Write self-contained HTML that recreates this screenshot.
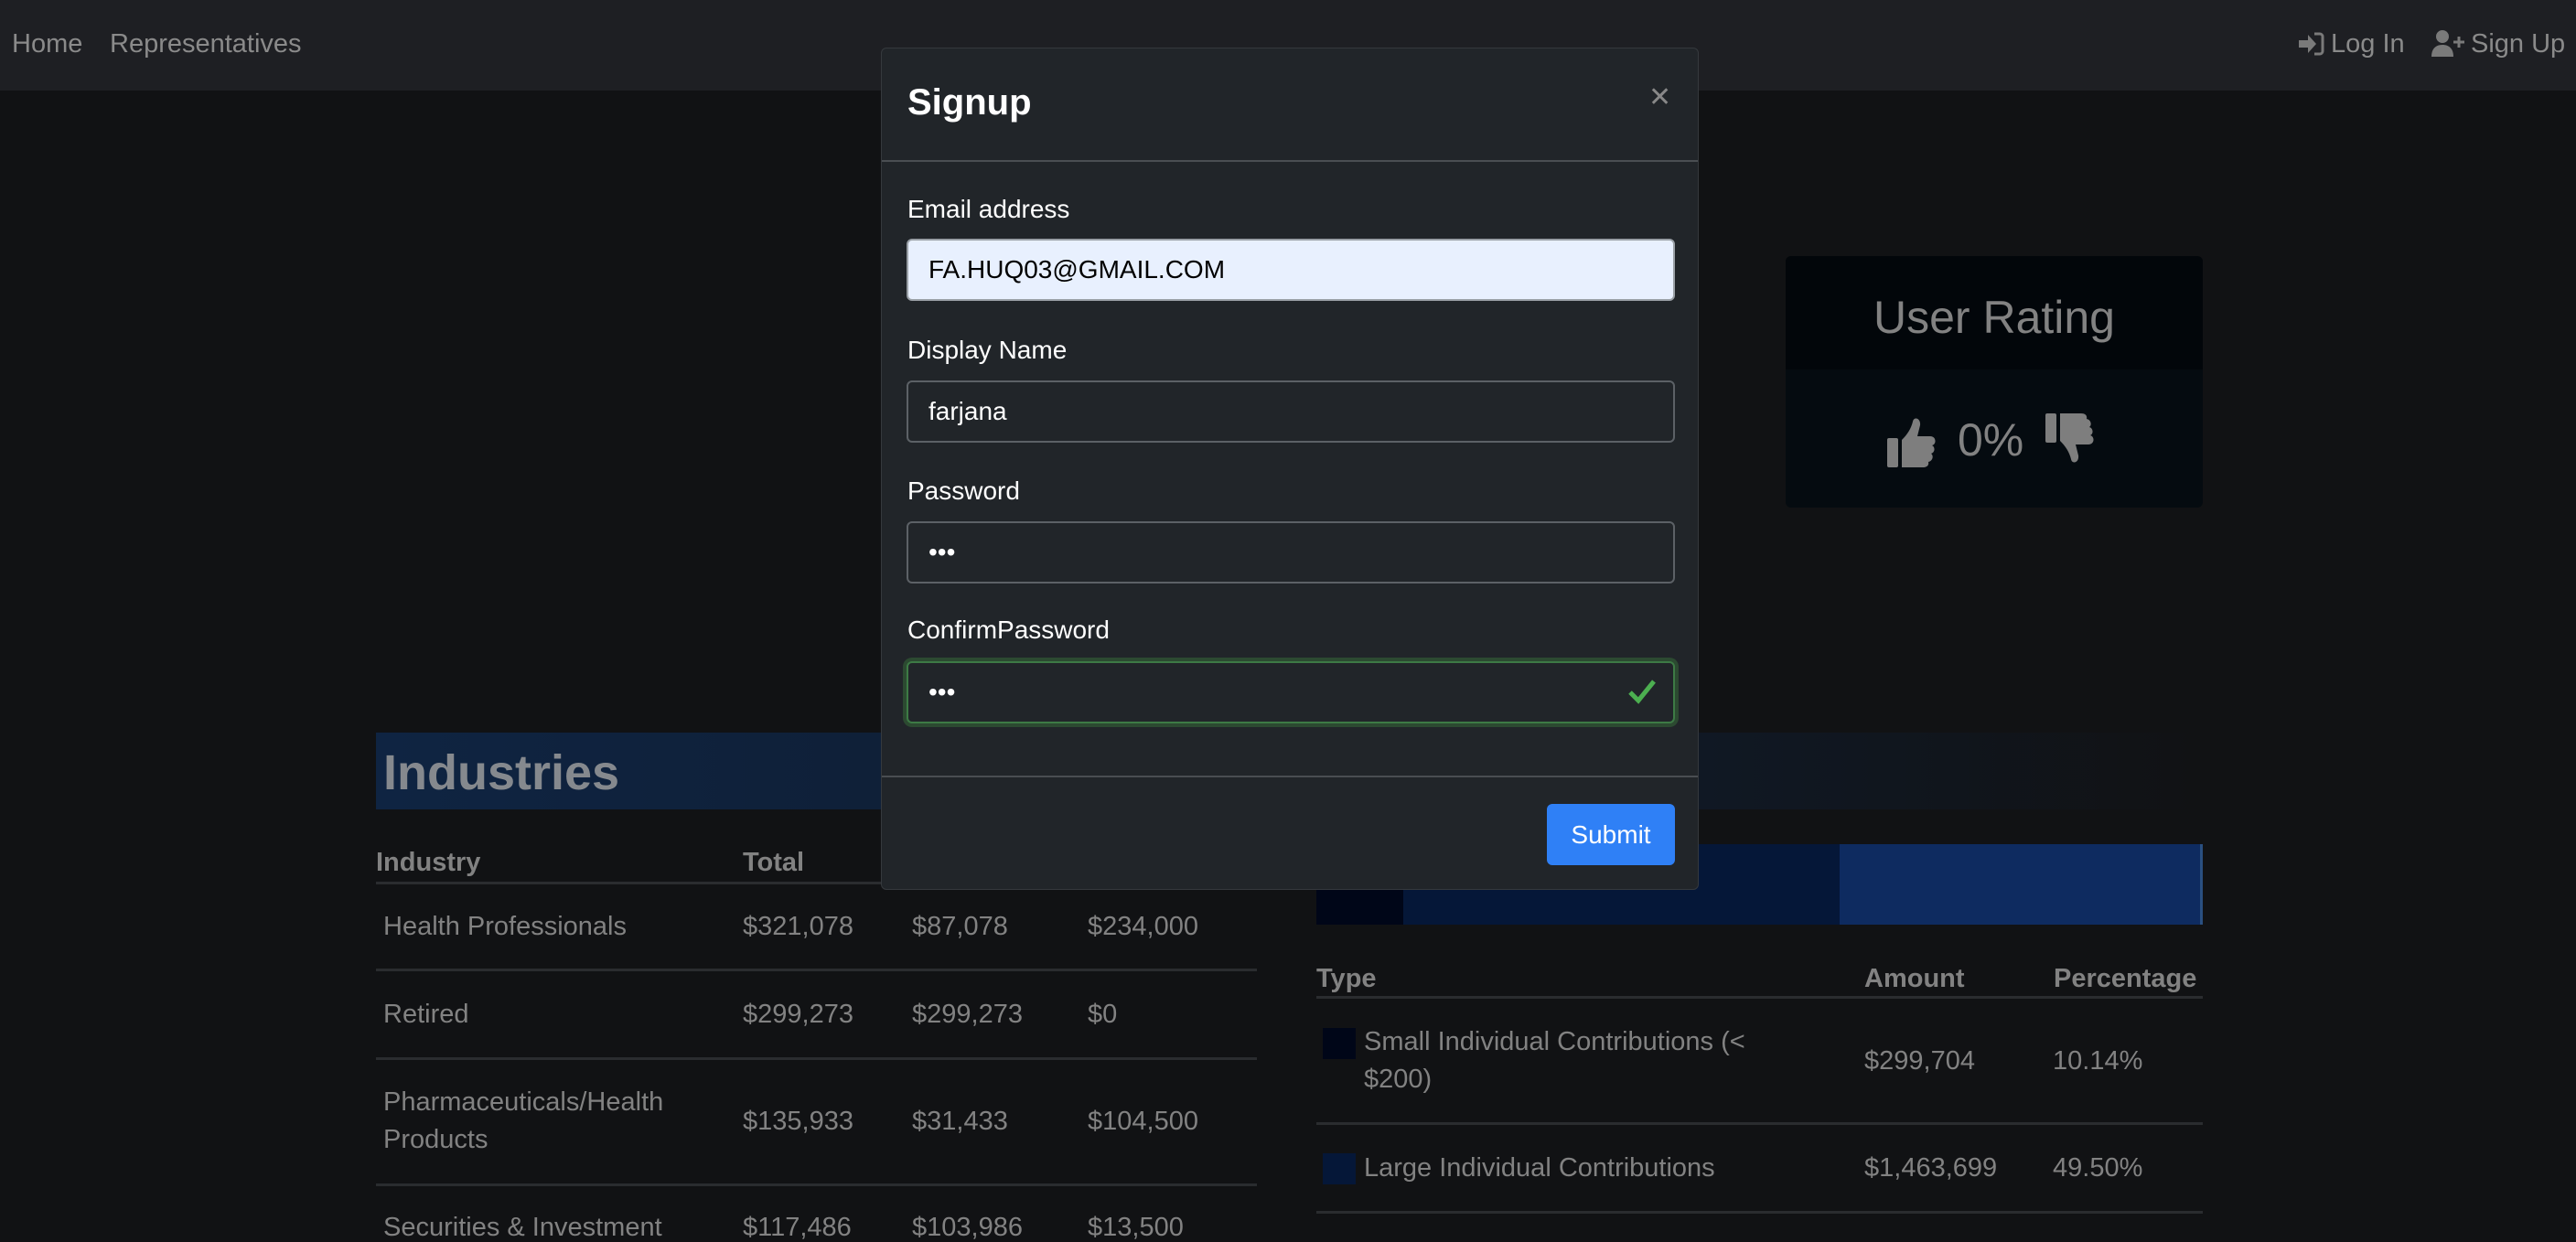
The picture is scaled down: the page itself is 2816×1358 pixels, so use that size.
<!DOCTYPE html>
<html><head><meta charset="utf-8"><style>
*{box-sizing:border-box;margin:0;padding:0}
body{width:2816px;height:1350px;overflow:hidden;background:#111214;font-family:"Liberation Sans",sans-serif;color:#828282;position:relative}
.a{position:absolute;white-space:nowrap}
.nav{left:0;top:0;width:2816px;height:99px;background:#1e1f23}
.t{font-size:29px;line-height:1}
.b{font-weight:bold}
.line{position:absolute;height:3px;background:#2a2c2f}
.modal{left:963px;top:52px;width:894px;height:921px;background:#212529;border-radius:6px;border:1px solid #35393d}
.lab{color:#fff;font-size:28px;left:28px}
.inp{position:absolute;left:27px;width:840px;height:68px;border:2px solid #5c6166;border-radius:6px;background:#212529;color:#fff;font-size:28px;padding-left:22px;line-height:64px}
</style></head><body>
<div class="a nav"></div>
<div class="a t" style="left:13px;top:34px;color:#8a8a8a">Home</div>
<div class="a t" style="left:120px;top:34px;color:#8a8a8a">Representatives</div>
<svg class="a" style="left:2511px;top:34px" width="30" height="28" viewBox="0 0 30 28"><path d="M2 10h10V4l9 10-9 10v-6H2z" fill="#7a7a7a"/><path d="M19 3h6a3 3 0 0 1 3 3v16a3 3 0 0 1-3 3h-6" stroke="#7a7a7a" stroke-width="3" fill="none"/></svg>
<div class="a t" style="left:2548px;top:34px;color:#8a8a8a">Log In</div>
<svg class="a" style="left:2658px;top:32px" width="38" height="30" viewBox="0 0 38 30"><circle cx="12" cy="8" r="7" fill="#7a7a7a"/><path d="M0 30c0-9 5-13 12-13s12 4 12 13z" fill="#7a7a7a"/><path d="M30 8v12M24 14h12" stroke="#7a7a7a" stroke-width="3"/></svg>
<div class="a t" style="left:2701px;top:34px;color:#8a8a8a">Sign Up</div>

<div class="a" style="left:1952px;top:280px;width:456px;height:275px;background:#050b10;border-radius:6px;overflow:hidden"><div style="height:124px;background:#02060a"></div></div>
<div class="a" style="left:1952px;top:318px;width:456px;text-align:center;font-size:50px;color:#828282">User Rating</div>
<svg class="a" style="left:2063px;top:455px" width="58" height="56" viewBox="0 0 58 56"><rect x="0" y="24" width="12" height="32" rx="2" fill="#7e7e7e"/><path d="M16 26c6-6 10-12 12-20 1-6 9-4 8 4l-3 12h14c7 0 7 9 2 10 4 2 3 8-1 9 3 2 2 8-3 9 1 4-2 6-6 6H16z" fill="#7e7e7e"/></svg>
<div class="a" style="left:2140px;top:452px;font-size:50px;color:#828282">0%</div>
<svg class="a" style="left:2236px;top:452px" width="58" height="56" viewBox="0 0 58 56" transform="scale(1,-1)"><rect x="0" y="24" width="12" height="32" rx="2" fill="#7e7e7e"/><path d="M16 26c6-6 10-12 12-20 1-6 9-4 8 4l-3 12h14c7 0 7 9 2 10 4 2 3 8-1 9 3 2 2 8-3 9 1 4-2 6-6 6H16z" fill="#7e7e7e"/></svg>

<div class="a" style="left:411px;top:801px;width:1997px;height:84px;background:linear-gradient(90deg,#0f2442 0%,#0f1c2e 55%,#111214 100%)"></div>
<div class="a b" style="left:419px;top:814px;font-size:54px;color:#85898e">Industries</div>

<div class="a t b" style="left:411px;top:929px">Industry</div>
<div class="a t b" style="left:812px;top:929px">Total</div>
<div class="line" style="left:411px;top:964px;width:963px"></div>
<div class="a t" style="left:419px;top:999px">Health Professionals</div>
<div class="a t" style="left:812px;top:999px">$321,078</div>
<div class="a t" style="left:997px;top:999px">$87,078</div>
<div class="a t" style="left:1189px;top:999px">$234,000</div>
<div class="line" style="left:411px;top:1059px;width:963px"></div>
<div class="a t" style="left:419px;top:1095px">Retired</div>
<div class="a t" style="left:812px;top:1095px">$299,273</div>
<div class="a t" style="left:997px;top:1095px">$299,273</div>
<div class="a t" style="left:1189px;top:1095px">$0</div>
<div class="line" style="left:411px;top:1156px;width:963px"></div>
<div class="a t" style="left:419px;top:1191px">Pharmaceuticals/Health</div>
<div class="a t" style="left:419px;top:1232px">Products</div>
<div class="a t" style="left:812px;top:1212px">$135,933</div>
<div class="a t" style="left:997px;top:1212px">$31,433</div>
<div class="a t" style="left:1189px;top:1212px">$104,500</div>
<div class="line" style="left:411px;top:1294px;width:963px"></div>
<div class="a t" style="left:419px;top:1328px">Securities &amp; Investment</div>
<div class="a t" style="left:812px;top:1328px">$117,486</div>
<div class="a t" style="left:997px;top:1328px">$103,986</div>
<div class="a t" style="left:1189px;top:1328px">$13,500</div>

<div class="a" style="left:1439px;top:923px;width:95px;height:88px;background:#000618"></div>
<div class="a" style="left:1534px;top:923px;width:477px;height:88px;background:#051738"></div>
<div class="a" style="left:2011px;top:923px;width:394px;height:88px;background:#0e2b60"></div>
<div class="a" style="left:2405px;top:923px;width:3px;height:88px;background:#2a4f80"></div>

<div class="a t b" style="left:1439px;top:1056px">Type</div>
<div class="a t b" style="left:2038px;top:1056px">Amount</div>
<div class="a t b" style="left:2245px;top:1056px">Percentage</div>
<div class="line" style="left:1439px;top:1089px;width:969px"></div>
<div class="a" style="left:1446px;top:1124px;width:36px;height:34px;background:#000618"></div>
<div class="a t" style="left:1491px;top:1125px">Small Individual Contributions (&lt;</div>
<div class="a t" style="left:1491px;top:1166px">$200)</div>
<div class="a t" style="left:2038px;top:1146px">$299,704</div>
<div class="a t" style="left:2244px;top:1146px">10.14%</div>
<div class="line" style="left:1439px;top:1227px;width:969px"></div>
<div class="a" style="left:1446px;top:1261px;width:36px;height:34px;background:#051738"></div>
<div class="a t" style="left:1491px;top:1263px">Large Individual Contributions</div>
<div class="a t" style="left:2038px;top:1263px">$1,463,699</div>
<div class="a t" style="left:2244px;top:1263px">49.50%</div>
<div class="line" style="left:1439px;top:1324px;width:969px"></div>

<div class="a modal">
<div class="a" style="left:28px;top:37px;font-size:40px;color:#fff;font-weight:bold;font-family:'Liberation Sans',sans-serif">Signup</div>
<div class="a" style="left:838px;top:36px;font-size:30px;color:#888">✕</div>
<div class="a" style="left:0;top:122px;width:892px;height:2px;background:#4a4e52"></div>
<div class="a lab" style="top:160px">Email address</div>
<div class="inp" style="top:208px;background:#e8f0fe;color:#000;border-color:#9aa0a6">FA.HUQ03@GMAIL.COM</div>
<div class="a lab" style="top:314px">Display Name</div>
<div class="inp" style="top:363px">farjana</div>
<div class="a lab" style="top:468px">Password</div>
<div class="inp" style="top:517px">•••</div>
<div class="a lab" style="top:620px">ConfirmPassword</div>
<div class="inp" style="top:670px;border-color:#3d7a45;box-shadow:0 0 0 4px #2c4a31">•••</div>
<svg class="a" style="left:815px;top:687px" width="32" height="32" viewBox="0 0 32 32"><path d="M3 17l9 9L29 5" stroke="#4caf50" stroke-width="5" fill="none"/></svg>
<div class="a" style="left:0;top:795px;width:892px;height:2px;background:#4a4e52"></div>
<div class="a" style="left:727px;top:826px;width:140px;height:67px;background:#2f80f6;border-radius:6px;color:#fff;font-size:28px;text-align:center;line-height:67px">Submit</div>
</div>
</body></html>
